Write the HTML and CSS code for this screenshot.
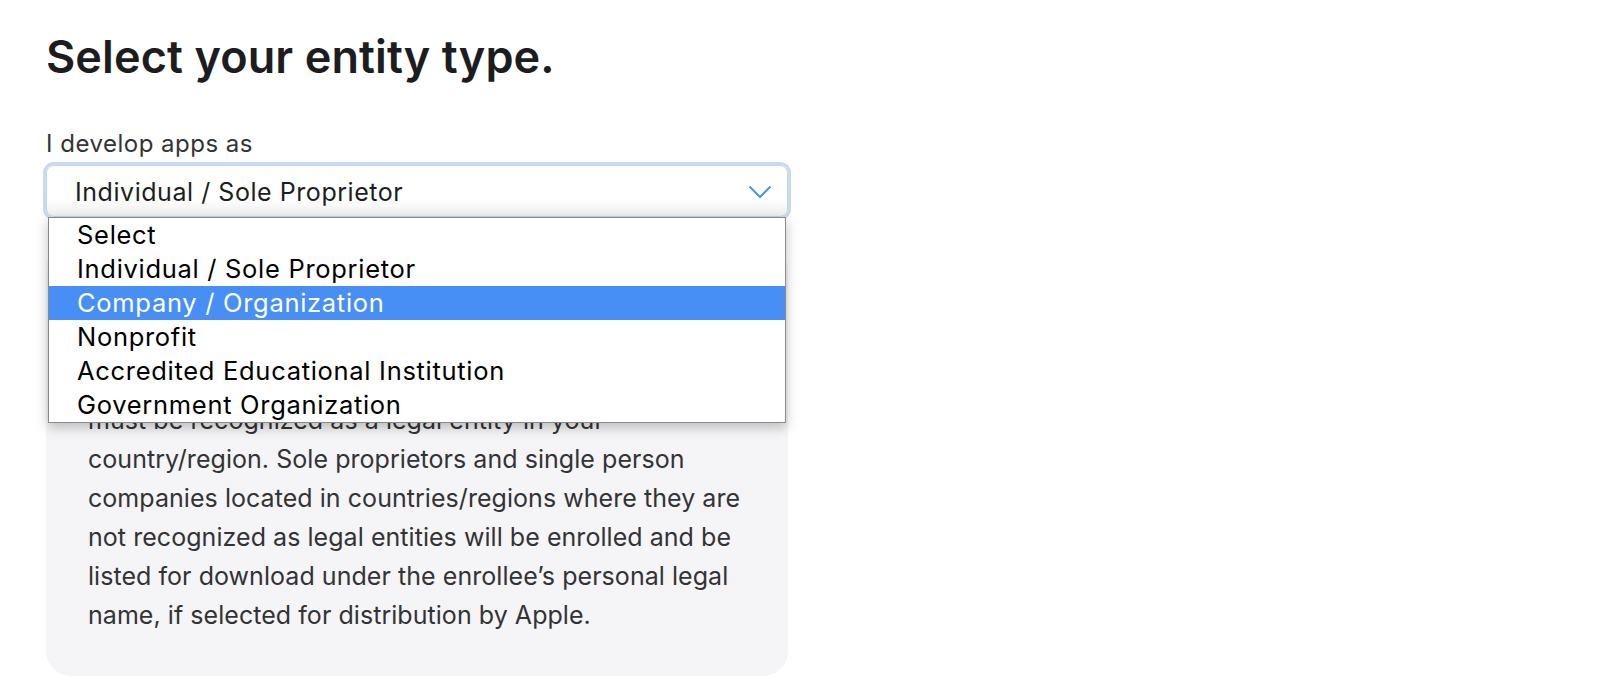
FILE: index.html
```html
<!DOCTYPE html>
<html>
<head>
<meta charset="utf-8">
<link rel="stylesheet" href="styles.css">
</head>
<body>
<main class="page">
  <h1 class="title">Select your entity type.</h1>
  <div class="field">
    <div class="label">I develop apps as</div>
    <div class="select-wrap">
      <div class="select">
        <span class="select-value">Individual / Sole Proprietor</span>
        <svg class="chevron" width="24" height="14" viewBox="0 0 24 14"><path d="M1.5 1.5 L12 12 L22.5 1.5" fill="none" stroke="#4a98d6" stroke-width="2"/></svg>
      </div>
      <ul class="menu">
        <li class="option">Select</li>
        <li class="option">Individual / Sole Proprietor</li>
        <li class="option active">Company / Organization</li>
        <li class="option">Nonprofit</li>
        <li class="option">Accredited Educational Institution</li>
        <li class="option">Government Organization</li>
      </ul>
    </div>
  </div>
  <div class="card">
    <p class="card-text">If you’re an individual or sole proprietor, your<br>apps will be listed under your personal name.<br>Your business, if you enroll as an organization,<br>must be recognized as a legal entity in your<br>country/region. Sole proprietors and single person<br>companies located in countries/regions where they are<br>not recognized as legal entities will be enrolled and be<br>listed for download under the enrollee’s personal legal<br>name, if selected for distribution by Apple.</p>
  </div>
</main>
</body>
</html>
```
FILE: styles.css
```css
* { box-sizing: border-box; }
body { margin: 0; background: #fff; font-family: Inter, "Noto Sans", sans-serif; color: #1d1d1f; }
.page { padding: 31px 0 0 46px; width: 788px; }
.title { margin: 0; font-size: 45px; line-height: 52px; font-weight: 600; letter-spacing: 0.1px; color: #1d1d1f; }
.field { margin-top: 47px; }
.label { font-size: 24px; line-height: 28px; letter-spacing: 0.5px; color: #333; }
.select-wrap { position: relative; margin-top: 7px; }
.select { height: 52px; border: 1px solid #c3d6ea; border-radius: 8px; box-shadow: 0 0 0 3px #c6dbf0; display: flex; align-items: center; justify-content: space-between; padding: 2px 15px 0 28px; font-size: 25px; letter-spacing: 0.55px; color: #1d1d1f; background: linear-gradient(#fff 65%, #f0f0f0); }
.chevron { display: block; }
.menu { position: absolute; left: 2px; top: 52px; width: 738px; margin: 0; padding: 0; list-style: none; background: #fff; border: 1px solid #8a8a8a; box-shadow: 0 4px 12px rgba(0,0,0,0.25); z-index: 2; }
.option { height: 34px; line-height: 34px; padding-left: 28px; font-size: 25.5px; letter-spacing: 0.7px; color: #000; white-space: nowrap; }
.option.active { background: #478ef5; color: #fff; }
.card { margin-top: 28px; background: #f5f5f7; border-radius: 25px; padding: 39px 42px 41px; }
.card-text { margin: 0; font-size: 25px; line-height: 39px; letter-spacing: 0.05px; color: #333336; white-space: nowrap; }
```
